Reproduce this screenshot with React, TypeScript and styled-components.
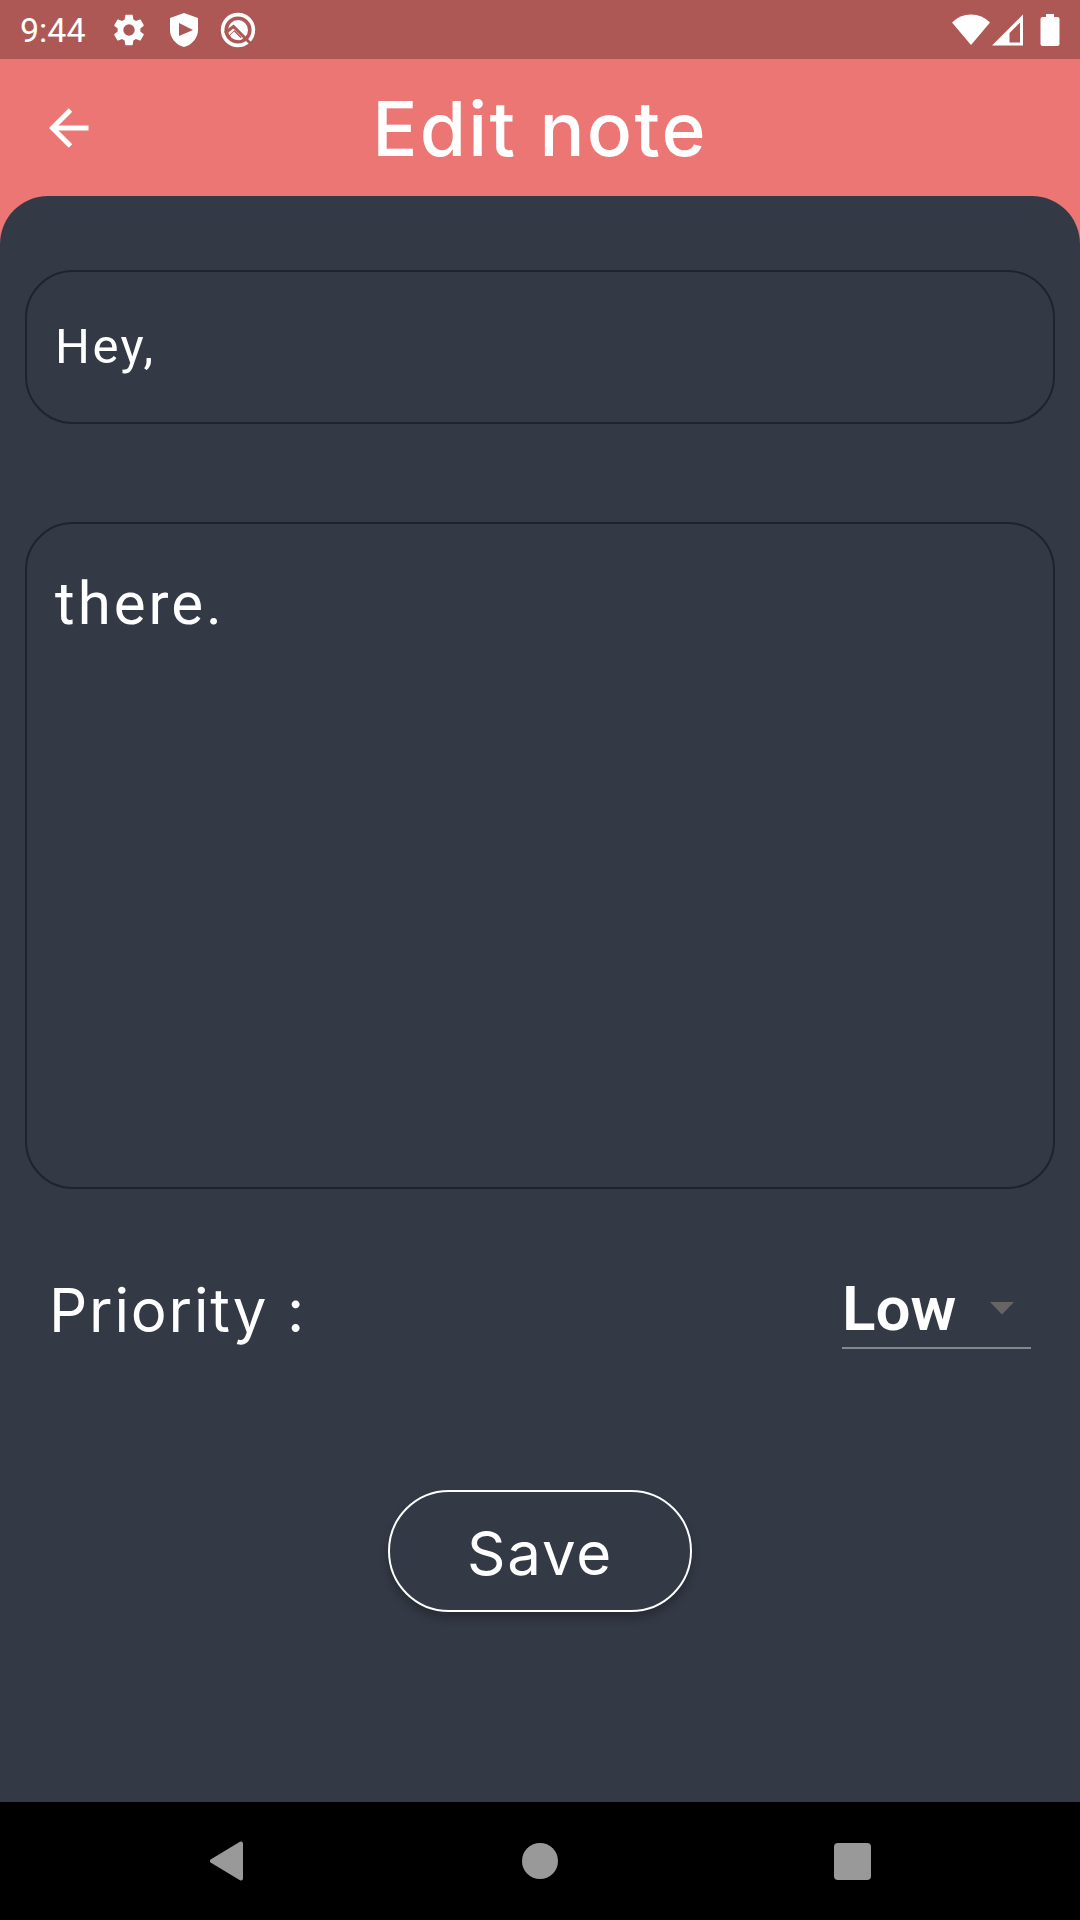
import React, { useState } from "react";
import styled, { createGlobalStyle } from "styled-components";

const colors = {
  status: "#ad5855",
  coral: "#eb7673",
  panel: "#333945",
  outline: "#20232c",
  text: "#ffffff",
  nav: "#999999",
};

const display = `Inter, "Open Sans", sans-serif`;
const body = `Roboto, "Liberation Sans", sans-serif`;

const GlobalStyle = createGlobalStyle`
  *, *::before, *::after { box-sizing: border-box; }
  body { margin: 0; background: ${colors.panel}; }
`;

const Screen = styled.div`
  display: flex;
  flex-direction: column;
  min-height: 100vh;
  color: ${colors.text};
  background: ${colors.coral};
  font-family: ${body};
`;

const StatusBar = styled.div`
  display: flex;
  align-items: center;
  justify-content: space-between;
  height: 59px;
  padding: 0 20px;
  background: ${colors.status};
`;

const StatusGroup = styled.div<{ $gap: number }>`
  display: flex;
  align-items: center;
  gap: ${({ $gap }) => $gap}px;
  svg { display: block; }
`;

const Clock = styled.time`
  margin-right: 2px;
  font-size: 34px;
  line-height: 40px;
`;

const Header = styled.header`
  display: grid;
  grid-template-columns: 72px 1fr 72px;
  align-items: center;
  height: 137px;
  padding: 0 33px;
`;

const IconButton = styled.button`
  display: flex;
  align-items: center;
  justify-content: center;
  width: 72px;
  height: 72px;
  padding: 0;
  border: 0;
  background: none;
  color: inherit;
  cursor: pointer;
`;

const Title = styled.h1`
  margin: 0;
  padding-top: 2px;
  font-family: ${display};
  font-size: 75px;
  font-weight: 500;
  line-height: 90px;
  letter-spacing: 0.03em;
  text-align: center;
`;

const Form = styled.form`
  display: flex;
  flex: 1;
  flex-direction: column;
  padding: 74px 25px 48px;
  border-radius: 48px 48px 0 0;
  background: ${colors.panel};
`;

const TitleField = styled.input`
  width: 100%;
  height: 154px;
  padding: 0 28px 2px;
  border: 2px solid ${colors.outline};
  border-radius: 48px;
  background: transparent;
  color: inherit;
  font-family: ${body};
  font-size: 49px;
  line-height: 56px;
  letter-spacing: 0.05em;
  outline: none;
`;

const NoteField = styled.textarea`
  display: block;
  width: 100%;
  height: 667px;
  margin-top: 98px;
  padding: 45px 28px;
  border: 2px solid ${colors.outline};
  border-radius: 48px;
  background: transparent;
  color: inherit;
  font-family: ${body};
  font-size: 60px;
  line-height: 70px;
  letter-spacing: 0.05em;
  resize: none;
  outline: none;
`;

const PriorityRow = styled.div`
  display: flex;
  align-items: center;
  justify-content: space-between;
  margin-top: 80px;
  padding: 0 24px;
`;

const Label = styled.label`
  padding-top: 2px;
  font-family: ${display};
  font-size: 60px;
  font-weight: 400;
  line-height: 78px;
  letter-spacing: 0.03em;
`;

const SelectBox = styled.div`
  display: grid;
  align-items: center;
  width: 189px;
  border-bottom: 2px solid #85878b;
  > * { grid-area: 1 / 1; }
  svg {
    justify-self: end;
    margin-right: 16px;
    pointer-events: none;
  }
`;

const Select = styled.select`
  width: 100%;
  height: 78px;
  padding: 0;
  border: 0;
  appearance: none;
  background: transparent;
  color: inherit;
  font-family: ${body};
  font-size: 62px;
  font-weight: 600;
  outline: none;
  option { color: #222; }
`;

const SaveButton = styled.button`
  align-self: center;
  width: 304px;
  height: 122px;
  margin-top: 141px;
  padding: 4px 0 0;
  border: 2px solid ${colors.text};
  border-radius: 61px;
  background: ${colors.panel};
  box-shadow: 0 6px 8px rgba(0, 0, 0, 0.25);
  color: inherit;
  font-family: ${display};
  font-size: 60px;
  font-weight: 400;
  letter-spacing: 0.03em;
  cursor: pointer;
`;

const NavBar = styled.nav`
  display: flex;
  align-items: center;
  justify-content: center;
  gap: 240px;
  height: 118px;
  background: #000;
  color: ${colors.nav};
`;

const GearIcon = () => (
  <svg width="38" height="38" viewBox="0 0 24 24" fill="#fff" aria-hidden="true">
    <path d="M19.14 12.94c.04-.3.06-.61.06-.94s-.02-.64-.07-.94l2.03-1.58a.49.49 0 0 0 .12-.61l-1.92-3.32a.49.49 0 0 0-.59-.22l-2.39.96a7 7 0 0 0-1.62-.94l-.36-2.54a.48.48 0 0 0-.48-.41h-3.84a.48.48 0 0 0-.47.41l-.36 2.54c-.59.24-1.13.57-1.62.94l-2.39-.96a.48.48 0 0 0-.59.22L2.74 8.87a.48.48 0 0 0 .12.61l2.03 1.58c-.05.3-.09.63-.09.94s.02.64.07.94l-2.03 1.58a.49.49 0 0 0-.12.61l1.92 3.32c.12.22.37.29.59.22l2.39-.96c.5.38 1.03.7 1.62.94l.36 2.54c.05.24.24.41.48.41h3.84c.24 0 .44-.17.47-.41l.36-2.54a7 7 0 0 0 1.62-.94l2.39.96c.22.08.47 0 .59-.22l1.92-3.32a.48.48 0 0 0-.12-.61zM12 15.6a3.6 3.6 0 1 1 0-7.2 3.6 3.6 0 0 1 0 7.2z" />
  </svg>
);

const ShieldIcon = () => (
  <svg width="28" height="34" viewBox="0 0 28 34" fill="#fff" fillRule="evenodd" aria-hidden="true">
    <path d="M14 0 28 5V17C28 25 22 32 14 34C6 32 0 25 0 17V5ZM9 10V23L23 17Z" />
  </svg>
);

const RingIcon = () => (
  <svg width="36" height="36" viewBox="0 0 36 36" fill="none" aria-hidden="true">
    <circle cx="18" cy="18" r="15.4" stroke="#fff" strokeWidth="3.6" />
    <circle cx="18" cy="18" r="10" fill="#fff" />
    <path d="M5 21 13.5 14.5 31 32" stroke={colors.status} strokeWidth="3" />
    <path d="M9.5 24.5 14.5 19.5 21 26" stroke={colors.status} strokeWidth="2" />
    <path d="M10 23.5 14 19.5 22 27.5C18 29 12.5 28 10 23.5Z" fill="#fff" />
  </svg>
);

const WifiIcon = () => (
  <svg width="38" height="32" viewBox="0 0 38 32" fill="#fff" aria-hidden="true">
    <path d="M0 8.500Q8 .5 19 .5T38 8.500L19 31Z" />
  </svg>
);

const SignalIcon = () => (
  <svg width="32" height="32" viewBox="0 0 32 32" fill="#fff" fillRule="evenodd" aria-hidden="true">
    <path d="M0 31.500 31 .5V31.500ZM17.500 19V28.500H28V8.500Z" />
  </svg>
);

const BatteryIcon = () => (
  <svg width="20" height="32" viewBox="0 0 20 32" fill="#fff" aria-hidden="true">
    <path d="M6 0H14V3H17.500Q19.500 3 19.500 5V30Q19.500 32 17.500 32H2.500Q.5 32 .5 30V5Q.5 3 2.500 3H6Z" />
  </svg>
);

const BackArrow = () => (
  <svg width="40" height="40" viewBox="0 0 40 40" fill="none" stroke="#fff" strokeWidth="5" aria-hidden="true">
    <path d="M39.500 20H4M21.500 2 3.500 20 21.500 38" />
  </svg>
);

export default function App() {
  const [title, setTitle] = useState("Hey,");
  const [note, setNote] = useState("there.");
  const [priority, setPriority] = useState("Low");

  return (
    <Screen>
      <GlobalStyle />
      <StatusBar>
        <StatusGroup $gap={22}>
          <Clock>9:44</Clock>
          <GearIcon />
          <ShieldIcon />
          <RingIcon />
        </StatusGroup>
        <StatusGroup $gap={2}>
          <WifiIcon />
          <StatusGroup $gap={16}>
            <SignalIcon />
            <BatteryIcon />
          </StatusGroup>
        </StatusGroup>
      </StatusBar>
      <Header>
        <IconButton type="button" aria-label="Back">
          <BackArrow />
        </IconButton>
        <Title>Edit note</Title>
      </Header>
      <Form onSubmit={(e) => e.preventDefault()}>
        <TitleField aria-label="Title" value={title} onChange={(e) => setTitle(e.target.value)} />
        <NoteField aria-label="Note" value={note} onChange={(e) => setNote(e.target.value)} />
        <PriorityRow>
          <Label htmlFor="priority">Priority :</Label>
          <SelectBox>
            <Select id="priority" value={priority} onChange={(e) => setPriority(e.target.value)}>
              <option>Low</option>
              <option>Medium</option>
              <option>High</option>
            </Select>
            <svg width="26" height="13" viewBox="0 0 26 13" fill="#666563" aria-hidden="true">
              <path d="M1 0H25L13 12.500Z" />
            </svg>
          </SelectBox>
        </PriorityRow>
        <SaveButton type="submit">Save</SaveButton>
      </Form>
      <NavBar>
        <IconButton type="button" aria-label="Back">
          <svg width="36" height="40" viewBox="0 0 36 40" fill="currentColor" stroke="currentColor" strokeWidth="4" strokeLinejoin="round" aria-hidden="true">
            <path d="M31 2.500V37.500L2 20Z" />
          </svg>
        </IconButton>
        <IconButton type="button" aria-label="Home">
          <svg width="36" height="36" viewBox="0 0 36 36" fill="currentColor" aria-hidden="true">
            <circle cx="18" cy="18" r="18" />
          </svg>
        </IconButton>
        <IconButton type="button" aria-label="Recent apps">
          <svg width="37" height="37" viewBox="0 0 37 37" fill="currentColor" aria-hidden="true">
            <rect width="37" height="37" rx="4" />
          </svg>
        </IconButton>
      </NavBar>
    </Screen>
  );
}
